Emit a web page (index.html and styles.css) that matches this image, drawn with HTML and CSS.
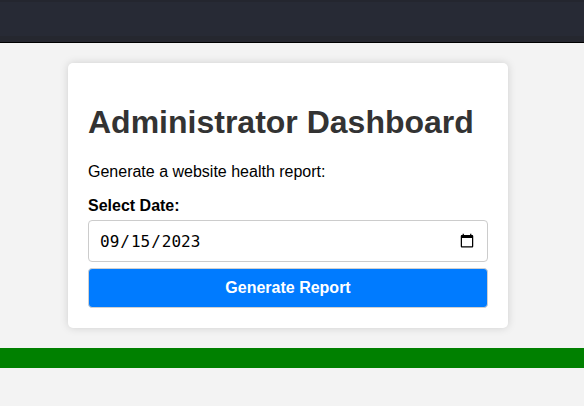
FILE: index.html
```html
<!DOCTYPE html>
<html>
<head>
<meta charset="utf-8">
<link rel="stylesheet" href="styles.css">
</head>
<body>
<header class="topbar"></header>
<main class="container">
  <section class="card">
    <h1 class="title">Administrator Dashboard</h1>
    <p class="intro">Generate a website health report:</p>
    <form class="form">
      <label class="label" for="date">Select Date:</label>
      <input class="date" type="date" id="date" value="2023-09-15">
      <button class="btn" type="button">Generate Report</button>
    </form>
  </section>
</main>
<div class="status-bar"></div>
</body>
</html>
```
FILE: styles.css
```css
html, body {
  margin: 0;
  padding: 0;
  background: #f3f3f3;
  font-family: "Liberation Sans", Arial, sans-serif;
  color: #000;
}
.topbar {
  height: 42px;
  background: #272a35;
  box-shadow: inset 0 2px 0 #24262f, inset 0 -6px 0 #25272f, 0 1px 0 #000;
}
.container {
  display: flex;
  justify-content: center;
  padding: 21px 8px 20px 0;
}
.card {
  width: 400px;
  padding: 20px;
  background: #fff;
  border-radius: 5px;
  box-shadow: 0 0 8px rgba(0,0,0,0.15);
}
.title {
  font-size: 32px;
  font-weight: bold;
  color: #333;
  margin: 21px 0 22px;
  line-height: 37px;
}
.intro {
  font-size: 16px;
  margin: 0 0 16px;
  line-height: 18px;
}
.form {
  display: flex;
  flex-direction: column;
}
.label {
  font-weight: bold;
  font-size: 16px;
  line-height: 18px;
  margin-bottom: 5px;
}
.date {
  box-sizing: border-box;
  width: 100%;
  height: 42px;
  padding: 10px;
  border: 1px solid #ccc;
  border-radius: 4px;
  font-family: "DejaVu Sans Mono", monospace;
  font-size: 16px;
  margin: 0 0 6px;
  background: #fff;
}
.btn {
  box-sizing: border-box;
  width: 100%;
  height: 40px;
  border: 1px solid #d0d0d0;
  border-radius: 4px;
  background: #007bff;
  color: #fff;
  font-family: "Liberation Sans", Arial, sans-serif;
  font-weight: bold;
  font-size: 16px;
}
.status-bar {
  height: 20px;
  background: #008000;
}
```
